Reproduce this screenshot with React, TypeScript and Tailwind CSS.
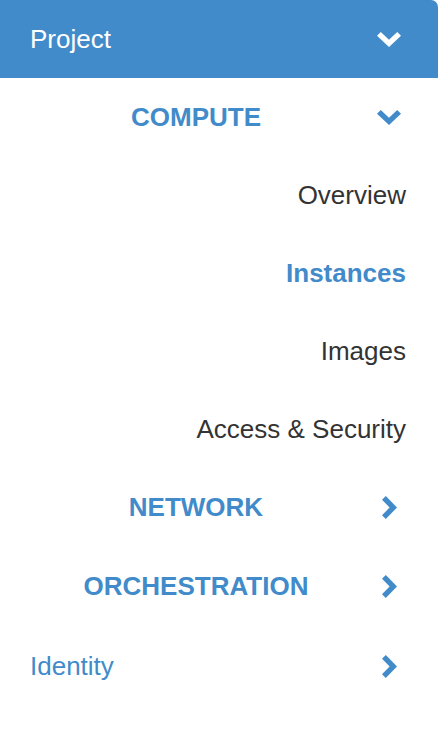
type NavItem = { label: string; active?: boolean };

const computeItems: NavItem[] = [
    { label: "Overview" },
    { label: "Instances", active: true },
    { label: "Images" },
    { label: "Access & Security" },
];

function ChevronDown({ className }: { className?: string }) {
    return (
        <svg viewBox="0 0 24 15" className={className} fill="currentColor">
            <polygon points="0,3.8 3.8,0 12,7.8 20.2,0 24,3.8 12,15" />
        </svg>
    );
}

function ChevronRight({ className }: { className?: string }) {
    return (
        <svg viewBox="0 0 15 23" className={className} fill="currentColor">
            <polygon points="0,3.8 3.8,0 15,11.5 3.8,23 0,19.2 7.6,11.5" />
        </svg>
    );
}

function SectionRow({ label, open, height }: { label: string; open?: boolean; height: string }) {
    return (
        <div className={`grid grid-cols-[377px_24px] items-center ${height}`}>
            <span className="pl-[15px] text-center font-bold text-[#428bca]">{label}</span>
            {open ? (
                <ChevronDown className="h-[15px] w-[24px] text-[#428bca]" />
            ) : (
                <div className="flex justify-center pl-[1px]">
                    <ChevronRight className="h-[23px] w-[15px] text-[#428bca]" />
                </div>
            )}
        </div>
    );
}

export default function App() {
    return (
        <div
            className="w-[444px] h-[756px] bg-white text-[26px] leading-none"
            style={{ fontFamily: '"Liberation Sans", Arial, sans-serif' }}
        >
            <div className="w-[438px]">
                <div className="grid grid-cols-[377px_24px] items-center h-[78px] bg-[#428bca] rounded-tr-[7px]">
                    <span className="pl-[30px] text-white">Project</span>
                    <ChevronDown className="h-[15px] w-[24px] text-white" />
                </div>

                <SectionRow label="COMPUTE" open height="h-[78px]" />

                {computeItems.map(item => (
                    <div key={item.label} className="flex items-center justify-end h-[78px] pr-[32px]">
                        <span className={item.active ? "font-bold text-[#428bca]" : "text-[#333333]"}>
                            {item.label}
                        </span>
                    </div>
                ))}

                <SectionRow label="NETWORK" height="h-[78px]" />
                <SectionRow label="ORCHESTRATION" height="h-[80px]" />

                <div className="grid grid-cols-[377px_24px] items-center h-[80px]">
                    <span className="pl-[30px] text-[#428bca]">Identity</span>
                    <div className="flex justify-center pl-[1px]">
                        <ChevronRight className="h-[23px] w-[15px] text-[#428bca]" />
                    </div>
                </div>
            </div>
        </div>
    );
}
